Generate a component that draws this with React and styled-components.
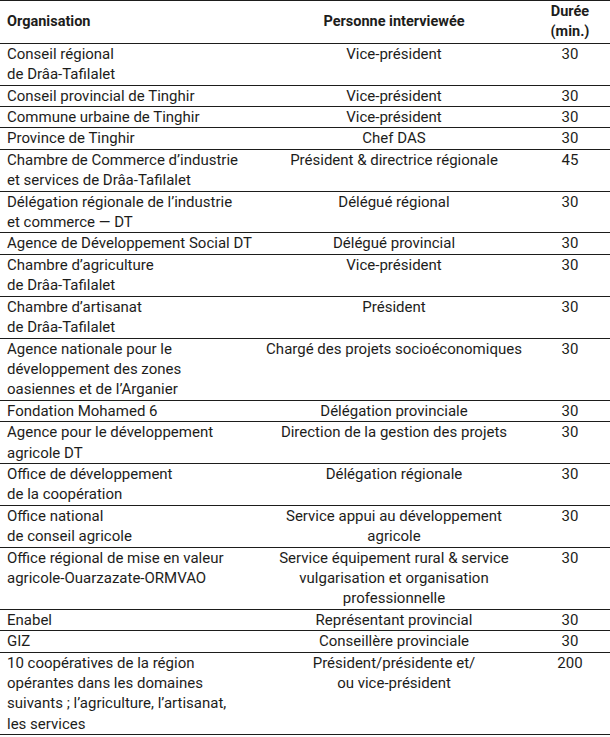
import React from "react";
import styled, { createGlobalStyle } from "styled-components";

const GlobalStyle = createGlobalStyle`
  body {
    margin: 0;
    background: #ffffff;
    font-family: Roboto, "Liberation Sans", sans-serif;
    color: #1d1d1b;
  }
`;

const Table = styled.table`
  width: 610px;
  border-collapse: collapse;
  border-top: 1px solid #1d1d1b;
  font-size: 15px;
  line-height: 20.4px;
`;

const HeadCell = styled.th`
  font-weight: 700;
  font-size: 14.5px;
  text-align: ${(p) => p.align || "center"};
  vertical-align: middle;
  padding: 1px 0 0 ${(p) => (p.align === "left" ? "7px" : "0")};
  border-bottom: 1px solid #1d1d1b;
  height: 40px;
`;

const Cell = styled.td`
  text-align: ${(p) => p.align || "center"};
  vertical-align: top;
  padding: 0 0 0 ${(p) => (p.align === "left" ? "7px" : "0")};
  border-bottom: 1px solid #1d1d1b;
  white-space: nowrap;
`;

const rows = [
  [["Conseil régional", "de Drâa-Tafilalet"], ["Vice-président"], "30"],
  [["Conseil provincial de Tinghir"], ["Vice-président"], "30"],
  [["Commune urbaine de Tinghir"], ["Vice-président"], "30"],
  [["Province de Tinghir"], ["Chef DAS"], "30"],
  [
    ["Chambre de Commerce d’industrie", "et services de Drâa-Tafilalet"],
    ["Président & directrice régionale"],
    "45",
  ],
  [
    ["Délégation régionale de l’industrie", "et commerce — DT"],
    ["Délégué régional"],
    "30",
  ],
  [["Agence de Développement Social DT"], ["Délégué provincial"], "30"],
  [["Chambre d’agriculture", "de Drâa-Tafilalet"], ["Vice-président"], "30"],
  [["Chambre d’artisanat", "de Drâa-Tafilalet"], ["Président"], "30"],
  [
    [
      "Agence nationale pour le",
      "développement des zones",
      "oasiennes et de l’Arganier",
    ],
    ["Chargé des projets socioéconomiques"],
    "30",
  ],
  [["Fondation Mohamed 6"], ["Délégation provinciale"], "30"],
  [
    ["Agence pour le développement", "agricole DT"],
    ["Direction de la gestion des projets"],
    "30",
  ],
  [
    ["Office de développement", "de la coopération"],
    ["Délégation régionale"],
    "30",
  ],
  [
    ["Office national", "de conseil agricole"],
    ["Service appui au développement", "agricole"],
    "30",
  ],
  [
    ["Office régional de mise en valeur", "agricole-Ouarzazate-ORMVAO"],
    [
      "Service équipement rural & service",
      "vulgarisation et organisation",
      "professionnelle",
    ],
    "30",
  ],
  [["Enabel"], ["Représentant provincial"], "30"],
  [["GIZ"], ["Conseillère provinciale"], "30"],
  [
    [
      "10 coopératives de la région",
      "opérantes dans les domaines",
      "suivants ; l’agriculture, l’artisanat,",
      "les services",
    ],
    ["Président/présidente et/", "ou vice-président"],
    "200",
  ],
];

function Lines({ lines }) {
  return lines.map((line, i) => (
    <React.Fragment key={i}>
      {i > 0 && <br />}
      {line}
    </React.Fragment>
  ));
}

export default function App() {
  return (
    <>
      <GlobalStyle />
      <Table>
        <colgroup>
          <col style={{ width: 258 }} />
          <col style={{ width: 272 }} />
          <col style={{ width: 80 }} />
        </colgroup>
        <thead>
          <tr>
            <HeadCell align="left">Organisation</HeadCell>
            <HeadCell>Personne interviewée</HeadCell>
            <HeadCell>
              Durée
              <br />
              (min.)
            </HeadCell>
          </tr>
        </thead>
        <tbody>
          {rows.map(([org, person, duration], i) => (
            <tr key={i}>
              <Cell align="left">
                <Lines lines={org} />
              </Cell>
              <Cell>
                <Lines lines={person} />
              </Cell>
              <Cell>{duration}</Cell>
            </tr>
          ))}
        </tbody>
      </Table>
    </>
  );
}
